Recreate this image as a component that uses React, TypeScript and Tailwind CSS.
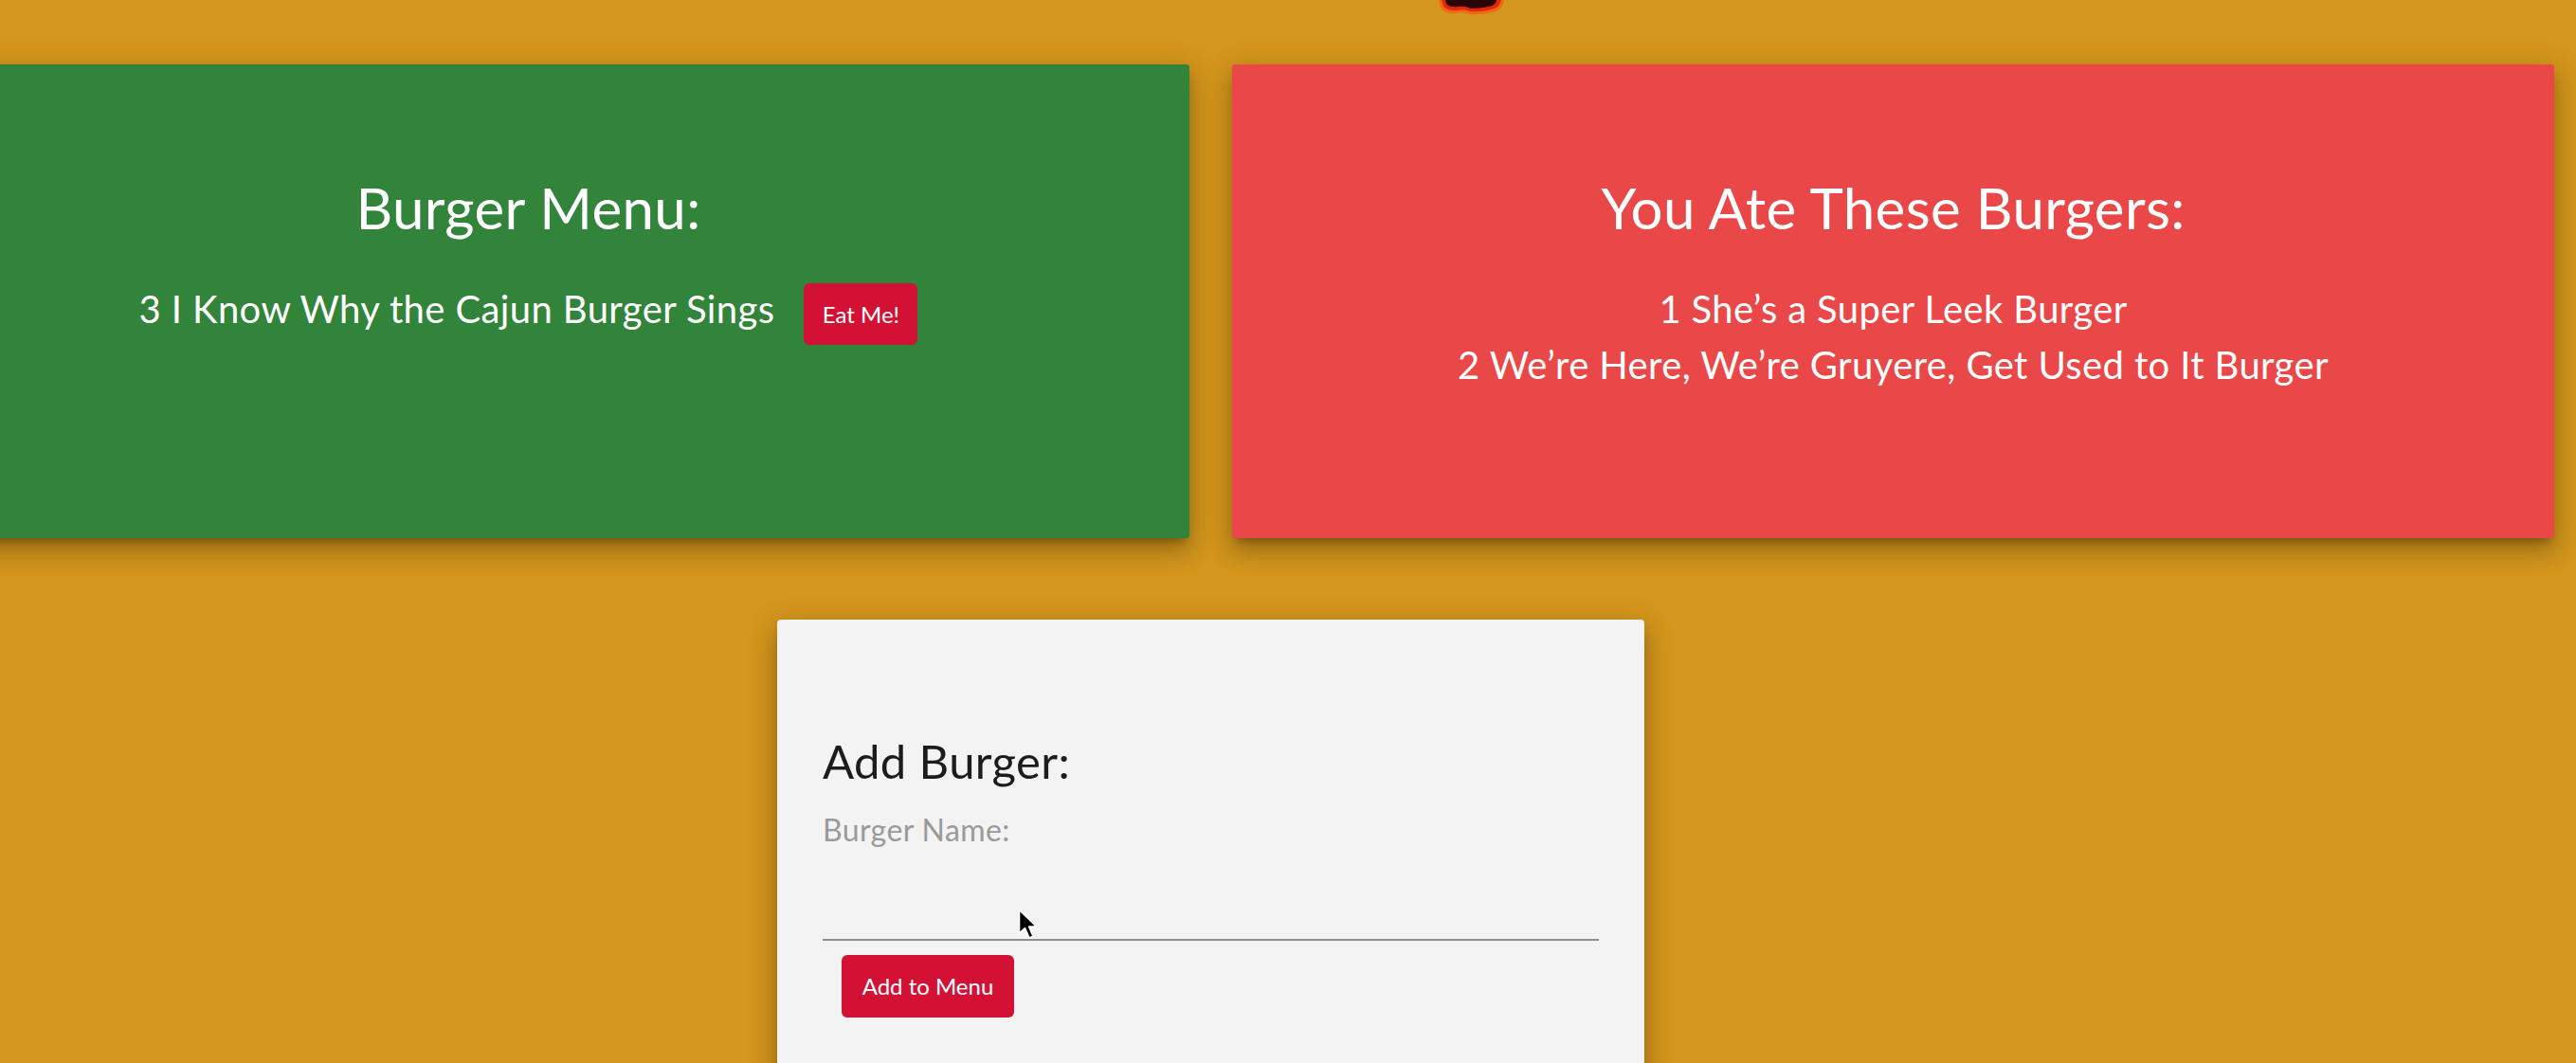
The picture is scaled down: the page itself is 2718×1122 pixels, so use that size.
import React from 'react'

const eaten = [
  { id: 1, name: "She’s a Super Leek Burger" },
  { id: 2, name: "We’re Here, We’re Gruyere, Get Used to It Burger" },
]

const cardShadow =
  'shadow-[0_16px_24px_2px_rgba(0,0,0,0.14),0_6px_30px_5px_rgba(0,0,0,0.12),0_8px_10px_-5px_rgba(0,0,0,0.3)]'

const App = () => {
  return (
    <div className="relative h-[1122px] w-full overflow-hidden bg-[#d4961c] font-['Lato',sans-serif] tracking-[0.024em]">
      {/* bottom of the header logo, cut off by the scroll */}
      <svg className="absolute left-[1512px] top-0" width="80" height="20" viewBox="0 0 80 20">
        <path d="M6 0 L8 8 Q12 15 24 14 Q32 12 38 15 Q50 16 62 13 Q72 11 74 4 L75 0 Z" fill="#ff4a12" opacity="0.55" />
        <path d="M9 0 L11 6 Q15 12 25 11 Q33 9 39 12 Q50 13 61 10 Q70 8 71 3 L72 0 Z" fill="#e8240c" />
        <path d="M13 0 L14 4 Q18 8 26 7 Q34 6 40 9 Q50 9 59 7 Q66 5 67 1 L67 0 Z" fill="#2a0505" />
      </svg>

      <div className="ml-[-140px] w-[2835px] pt-[68px]">
        <div className="flex gap-[45px]">
          {/* Menu */}
          <div className={`h-[500px] w-[1395px] rounded-[3px] bg-[#32843a] pt-[115px] text-center text-white ${cardShadow}`}>
            <h3 className="text-[60px] leading-[72px]">Burger Menu:</h3>
            <div className="mt-[42px] flex items-baseline justify-center gap-[31px]">
              <p className="text-[40px] leading-[59px]">3 I Know Why the Cajun Burger Sings</p>
              <button className="h-[65px] w-[120px] rounded-[6px] bg-[#d31135] text-[24px] leading-[65px] tracking-normal text-white">
                Eat Me!
              </button>
            </div>
          </div>

          {/* Eaten */}
          <div className={`h-[500px] w-[1395px] rounded-[3px] bg-[#ea4848] pt-[115px] text-center text-white ${cardShadow}`}>
            <h3 className="text-[60px] leading-[72px]">You Ate These Burgers:</h3>
            <div className="mt-[42px]">
              {eaten.map(b => (
                <p key={b.id} className="text-[40px] leading-[59px]">
                  {b.id} {b.name}
                </p>
              ))}
            </div>
          </div>
        </div>

        {/* Add form */}
        <div className={`mx-auto mt-[86px] h-[600px] w-[915px] rounded-[4px] bg-[#f3f3f3] px-[48px] pt-[120px] ${cardShadow}`}>
          <h4 className="text-[49px] leading-[59px] text-[#1c1c1c]">Add Burger:</h4>
          <label className="mt-[23px] block text-[32px] leading-[40px] text-[#9a9a9a]">Burger Name:</label>
          <input
            type="text"
            className="block h-[97px] w-full border-b-2 border-[#8e8e8e] bg-transparent text-[32px] outline-none"
          />
          <button className="ml-[20px] mt-[15px] h-[66px] w-[182px] rounded-[6px] bg-[#d31135] text-[24px] leading-[66px] tracking-normal text-white">
            Add to Menu
          </button>
        </div>
      </div>

      {/* mouse pointer caught in the capture */}
      <svg className="absolute left-[1074px] top-[959px]" width="22" height="34" viewBox="0 0 22 34">
        <path d="M1.5 1.5 L1.5 26 L7.5 20.5 L12 31 L16 29.3 L11.6 19 L19.5 19 Z" fill="#000" stroke="#fff" strokeWidth="1.6" strokeLinejoin="round" />
      </svg>
    </div>
  )
}

export default App
